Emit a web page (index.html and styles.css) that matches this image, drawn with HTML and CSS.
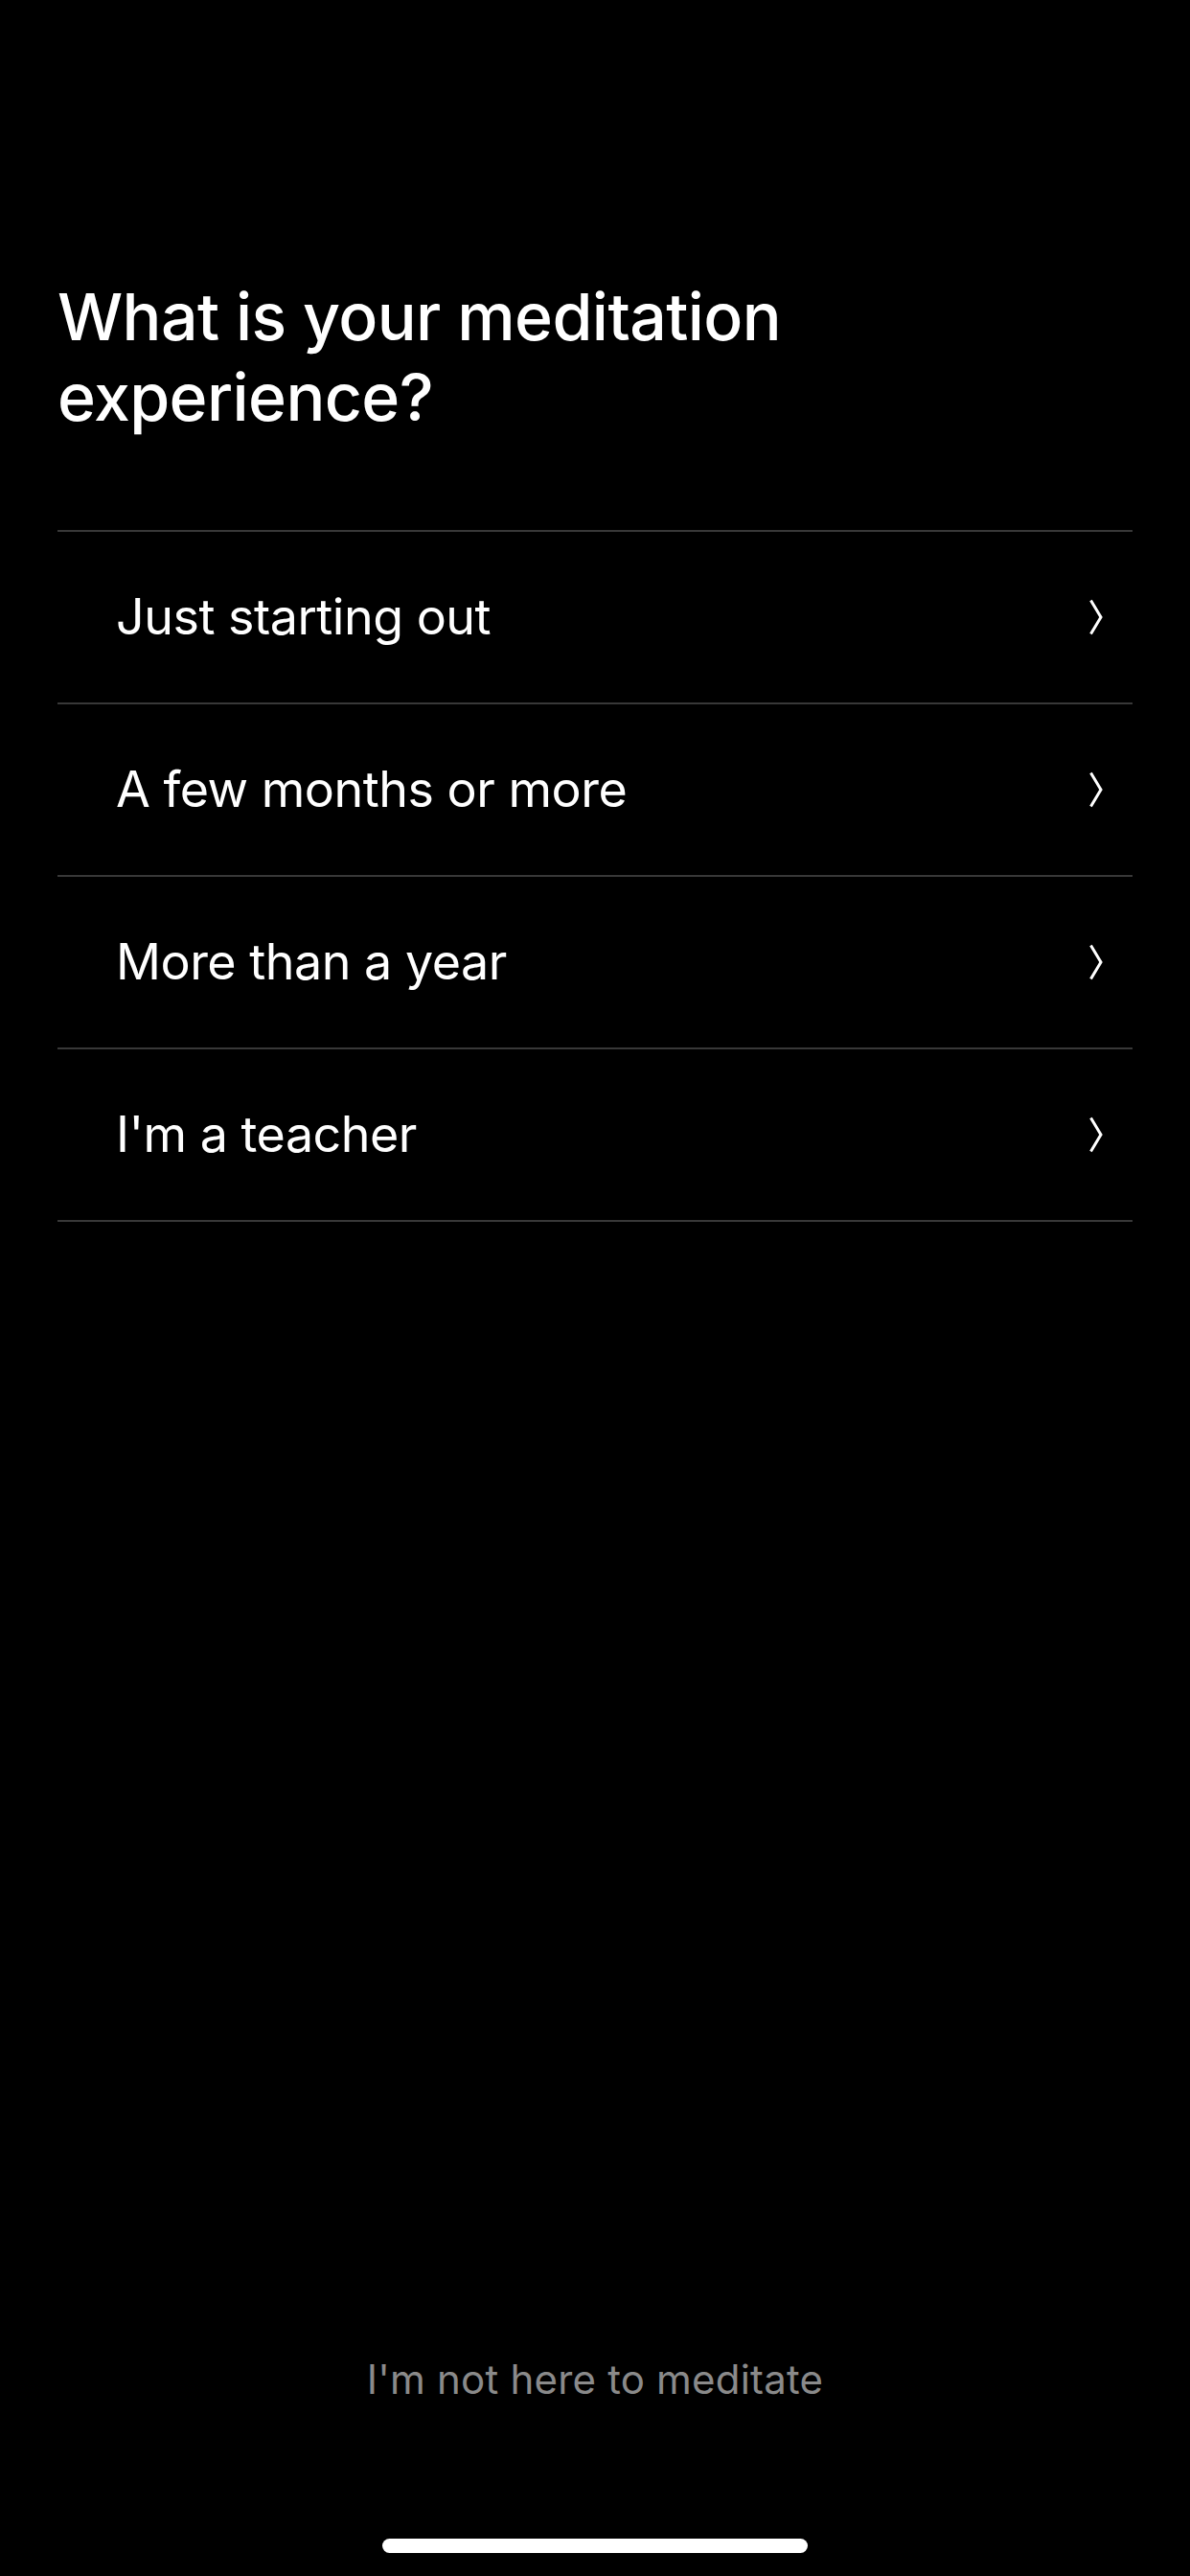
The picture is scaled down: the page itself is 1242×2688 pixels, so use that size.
FILE: index.html
```html
<!DOCTYPE html>
<html lang="en">
<head>
    <meta charset="UTF-8">
    <meta name="viewport" content="width=device-width, initial-scale=1.0">
    <title>Meditation Experience</title>
    <link rel="stylesheet" href="styles.css">
</head>
<body>
    <div class="screen">
        <h1 class="title">What is your meditation experience?</h1>

        <ul class="options">
            <li class="option">
                <span>Just starting out</span>
                <svg class="chevron" viewBox="0 0 14 38"><path d="M1.5 1.5 L12 19 L1.5 36.5"/></svg>
            </li>
            <li class="option">
                <span>A few months or more</span>
                <svg class="chevron" viewBox="0 0 14 38"><path d="M1.5 1.5 L12 19 L1.5 36.5"/></svg>
            </li>
            <li class="option">
                <span>More than a year</span>
                <svg class="chevron" viewBox="0 0 14 38"><path d="M1.5 1.5 L12 19 L1.5 36.5"/></svg>
            </li>
            <li class="option">
                <span>I'm a teacher</span>
                <svg class="chevron" viewBox="0 0 14 38"><path d="M1.5 1.5 L12 19 L1.5 36.5"/></svg>
            </li>
        </ul>

        <div class="footer">
            <a class="skip" href="#">I'm not here to meditate</a>
            <div class="home-bar"></div>
        </div>
    </div>
</body>
</html>
```

FILE: styles.css
```css
body {
    margin: 0;
    background: #000;
    color: #fff;
    font-family: Inter, "Open Sans", sans-serif;
}

.screen {
    min-height: 2688px;
    box-sizing: border-box;
    padding: 0 60px;
    display: flex;
    flex-direction: column;
}

.title {
    margin: 288px 0 0;
    max-width: 860px;
    font-size: 68px;
    font-weight: 500;
    line-height: 84px;
    letter-spacing: -0.6px;
}

.options {
    list-style: none;
    margin: 97px 0 0;
    padding: 0;
}

.option {
    height: 178px;
    display: flex;
    align-items: center;
    justify-content: space-between;
    padding: 0 31px 0 61px;
    border-top: 2px solid #383838;
    font-size: 52px;
    font-weight: 400;
    letter-spacing: -0.5px;
}

.option span {
    margin-top: -2px;
}

.option:last-child {
    border-bottom: 2px solid #383838;
}

.chevron {
    width: 14px;
    height: 38px;
    fill: none;
    stroke: #fff;
    stroke-width: 3;
}

.footer {
    margin-top: auto;
    display: flex;
    flex-direction: column;
    align-items: center;
}

.skip {
    color: #8a8a8a;
    text-decoration: none;
    font-size: 42px;
    letter-spacing: 0.2px;
}

.home-bar {
    width: 444px;
    height: 15px;
    margin: 141px 0 24px;
    border-radius: 8px;
    background: #fff;
}
```
